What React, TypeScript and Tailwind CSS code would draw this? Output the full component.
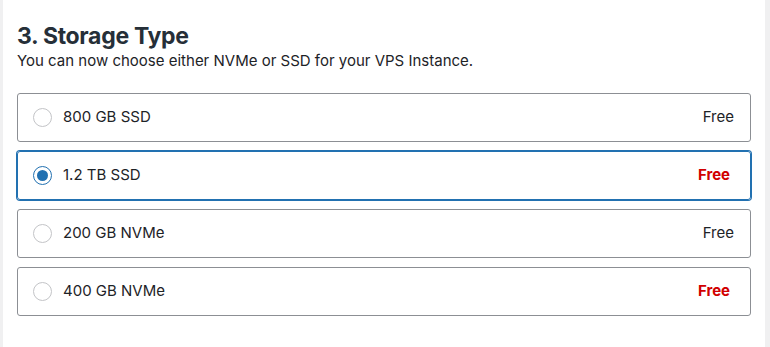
import { useState } from "react";

type Option = {
  id: string;
  label: string;
  price: string;
  highlight?: boolean;
};

const options: Option[] = [
  { id: "800ssd", label: "800 GB SSD", price: "Free" },
  { id: "1.2ssd", label: "1.2 TB SSD", price: "Free", highlight: true },
  { id: "200nvme", label: "200 GB NVMe", price: "Free" },
  { id: "400nvme", label: "400 GB NVMe", price: "Free", highlight: true },
];

export default function App() {
  const [selected, setSelected] = useState("1.2ssd");

  return (
    <div className="min-h-[347px] bg-[#f0f0f1] px-[3px] font-['Inter',sans-serif] text-[#1d2327]">
      <div className="min-h-[347px] w-[762px] bg-white pl-[14px] pr-[14px] pt-[21px]">
        <h2 className="text-[23px] font-bold leading-[30px] tracking-[-0.3px] text-[#262f38]">3. Storage Type</h2>
        <p className="text-[15px] leading-[20px] text-[#1d2327]">
          You can now choose either NVMe or SSD for your VPS Instance.
        </p>

        {/* Storage options */}
        <div className="mt-[22px] flex flex-col gap-[9px]">
          {options.map((o) => {
            const active = selected === o.id;
            return (
              <label
                key={o.id}
                onClick={() => setSelected(o.id)}
                className={
                  "flex h-[49px] cursor-pointer items-center rounded-[3px] border pl-[15px] pr-[16px] " +
                  (active ? "border-[#2271b1] shadow-[0_0_0_1px_#2271b1]" : "border-[#8c8f94]")
                }
              >
                <span
                  className={
                    "flex h-[19px] w-[19px] items-center justify-center rounded-full border " +
                    (active ? "border-[#2271b1]" : "border-[#c3c4c7]")
                  }
                >
                  {active && <span className="h-[11px] w-[11px] rounded-full bg-[#2271b1]" />}
                </span>
                <span className="ml-[11px] flex-1 text-[15px]">{o.label}</span>
                <span
                  className={
                    o.highlight
                      ? "mr-[4px] text-[15px] font-bold text-[#d10000]"
                      : "text-[15px] text-[#1d2327]"
                  }
                >
                  {o.price}
                </span>
              </label>
            );
          })}
        </div>
      </div>
    </div>
  );
}
